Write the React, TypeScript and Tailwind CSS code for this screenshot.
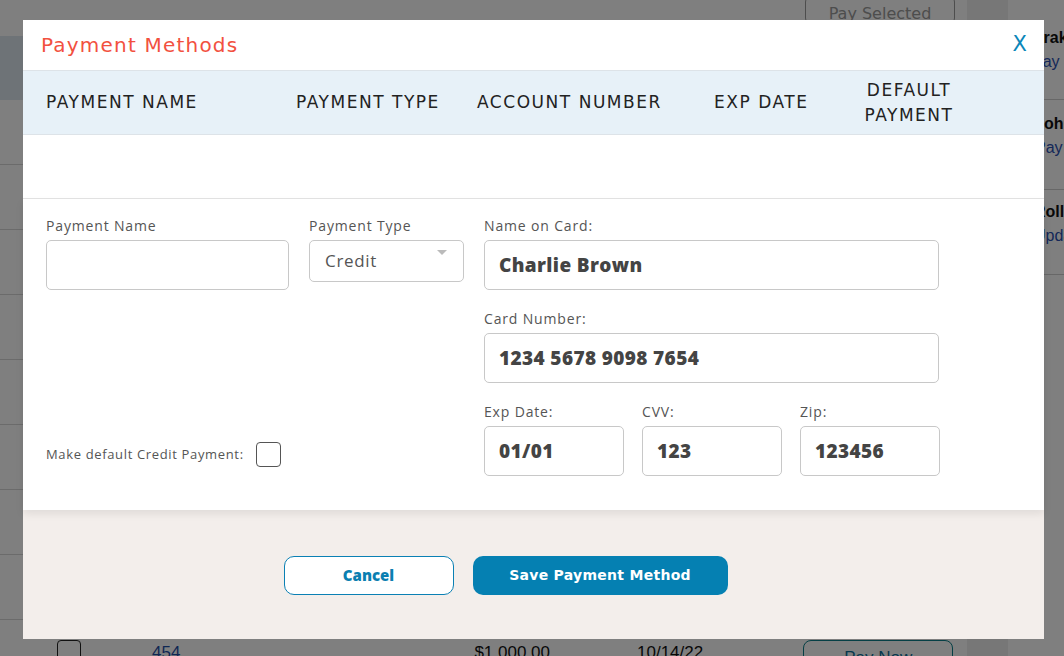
import { useState } from "react";

const rows = [0, 1, 2, 3, 4, 5, 6, 7, 8];

function Background() {
  return (
    <div className="flex h-[656px] w-[1064px] overflow-hidden bg-white font-['Liberation_Sans',sans-serif]">
      <div className="w-[967px] shrink-0 flex flex-col">
        <div className="h-[36px] flex justify-end pr-[12px] overflow-hidden shrink-0">
          <button className="h-[40px] -mt-[10px] w-[150px] rounded-xl border border-[#9a9a9a] text-[16px] text-[#9a9a9a] pt-[8px] font-['DejaVu_Sans',sans-serif]">
            Pay Selected
          </button>
        </div>
        <div className="h-[64px] bg-[#dde6ee] shrink-0" />
        {rows.map((r) => (
          <div key={r} className="h-[65px] border-b border-[#d6d6d6] shrink-0">
            {r === 8 && (
              <div className="flex items-start pt-[20px] text-[17px]">
                <div className="ml-[57px] w-[24px] h-[24px] rounded border border-[#222]" />
                <span className="ml-[71px] text-[#1f4fa8]">454</span>
                <span className="ml-[294px] text-[#111]">$1,000.00</span>
                <span className="ml-[87px] text-[#111]">10/14/22</span>
                <button className="ml-[100px] w-[150px] h-[36px] rounded-lg border border-[#0b7f8a] text-[#0b6f9a] text-[17px]">
                  Pay Now
                </button>
              </div>
            )}
          </div>
        ))}
      </div>
      <div className="w-[41px] shrink-0 bg-[#eeeeee]" />
      <div className="flex-1 min-w-0 overflow-hidden flex flex-col text-[16px]">
        <div className="h-[100px] shrink-0 border-b border-[#cfcfcf] pt-[26px] pl-[24px]">
          <div className="font-bold text-[#111] whitespace-nowrap">Drake Mallory</div>
          <div className="text-[#2a4fb0] whitespace-nowrap">Pay Now</div>
        </div>
        <div className="h-[90px] shrink-0 border-b border-[#cfcfcf] pt-[12px] pl-[27px]">
          <div className="font-bold text-[#111] whitespace-nowrap">John Smith</div>
          <div className="text-[#2a4fb0] whitespace-nowrap">Pay Now</div>
        </div>
        <div className="h-[85px] shrink-0 border-b border-[#cfcfcf] pt-[10px] pl-[26px]">
          <div className="font-bold text-[#111] whitespace-nowrap">Rollins</div>
          <div className="text-[#2a4fb0] whitespace-nowrap">Update</div>
        </div>
      </div>
    </div>
  );
}

function Field({
  label,
  value,
  width,
}: {
  label: string;
  value: string;
  width: string;
}) {
  return (
    <div className={`flex flex-col ${width}`}>
      <label className="text-[14px] text-[#555] tracking-[0.06em] leading-[20px] mb-[4px]">
        {label}
      </label>
      <div className="h-[50px] rounded-[5px] border border-[#c8c8c8] flex items-center px-[14px] text-[19px] font-extrabold tracking-[0.02em] text-[#444] font-['Open_Sans',sans-serif]">
        {value}
      </div>
    </div>
  );
}

export default function App() {
  const [checked, setChecked] = useState(false);

  return (
    <div className="relative w-[1064px] h-[656px] overflow-hidden">
      <Background />
      <div className="absolute inset-0 bg-black/50 flex justify-center pt-[20px] pl-[3px]">
        <div className="w-[1021px] h-[619px] bg-white flex flex-col font-['Open_Sans',sans-serif]">
          <div className="h-[50px] flex items-center justify-between pl-[18px] pr-[17px] shrink-0">
            <h2 className="text-[20px] text-[#f2513f] font-medium tracking-[0.06em] font-['DejaVu_Sans',sans-serif]">
              Payment Methods
            </h2>
            <button className="text-[21px] text-[#0a86b9] font-['DejaVu_Sans',sans-serif]">
              X
            </button>
          </div>

          <div className="h-[65px] bg-[#e7f1f8] border-y border-[#dde3e8] flex items-center text-[17px] text-[#222] tracking-[0.09em] font-['DejaVu_Sans',sans-serif] shrink-0">
            <div className="pl-[23px] w-[273px]">PAYMENT NAME</div>
            <div className="w-[181px]">PAYMENT TYPE</div>
            <div className="w-[237px]">ACCOUNT NUMBER</div>
            <div className="w-[135px]">EXP DATE</div>
            <div className="w-[120px] text-center leading-[25px]">
              DEFAULT
              <br />
              PAYMENT
            </div>
          </div>

          <div className="h-[64px] border-b border-[#e3e3e3] shrink-0" />

          <div className="relative z-10 bg-white shadow-[0_4px_8px_rgba(0,0,0,0.08)] flex pl-[23px] pt-[17px] pb-[34px] shrink-0">
            <div className="w-[243px] flex flex-col justify-between">
              <div className="flex flex-col">
                <label className="text-[14px] text-[#555] tracking-[0.06em] leading-[20px] mb-[4px]">
                  Payment Name
                </label>
                <input className="h-[50px] rounded-[5px] border border-[#c8c8c8] outline-none px-[14px]" />
              </div>
              <div className="flex items-center gap-[12px] mb-[9px]">
                <span className="text-[13px] text-[#555] tracking-[0.05em] whitespace-nowrap">
                  Make default Credit Payment:
                </span>
                <button
                  onClick={() => setChecked((p) => !p)}
                  className="w-[25px] h-[25px] shrink-0 rounded-[4px] border border-[#555] bg-white"
                >
                  {checked ? "✓" : ""}
                </button>
              </div>
            </div>

            <div className="ml-[20px] w-[155px] flex flex-col">
              <label className="text-[14px] text-[#555] tracking-[0.06em] leading-[20px] mb-[4px]">
                Payment Type
              </label>
              <div className="relative h-[42px] rounded-[5px] border border-[#c8c8c8] flex items-center px-[15px] text-[17px] text-[#555] tracking-[0.04em]">
                Credit
                <span className="absolute right-[16px] top-[9px] w-0 h-0 border-l-[5px] border-r-[5px] border-t-[5px] border-l-transparent border-r-transparent border-t-[#bbb]" />
              </div>
            </div>

            <div className="ml-[20px] w-[457px] flex flex-col gap-[19px]">
              <Field label="Name on Card:" value="Charlie Brown" width="w-[455px]" />
              <Field label="Card Number:" value="1234 5678 9098 7654" width="w-[455px]" />
              <div className="flex gap-[18px]">
                <Field label="Exp Date:" value="01/01" width="w-[140px]" />
                <Field label="CVV:" value="123" width="w-[140px]" />
                <Field label="Zip:" value="123456" width="w-[140px]" />
              </div>
            </div>
          </div>

          <div className="flex-1 bg-[#f3eeeb] flex justify-center items-start pt-[46px] gap-[19px] pr-[56px]">
            <button className="w-[170px] h-[39px] rounded-[10px] border border-[#0a80b4] bg-white text-[15px] font-extrabold text-[#0b7fb1]">
              Cancel
            </button>
            <button className="w-[255px] h-[39px] rounded-[10px] bg-[#0580b2] text-[14px] font-bold text-white tracking-[0.02em] font-['DejaVu_Sans',sans-serif]">
              Save Payment Method
            </button>
          </div>
        </div>
      </div>
    </div>
  );
}
